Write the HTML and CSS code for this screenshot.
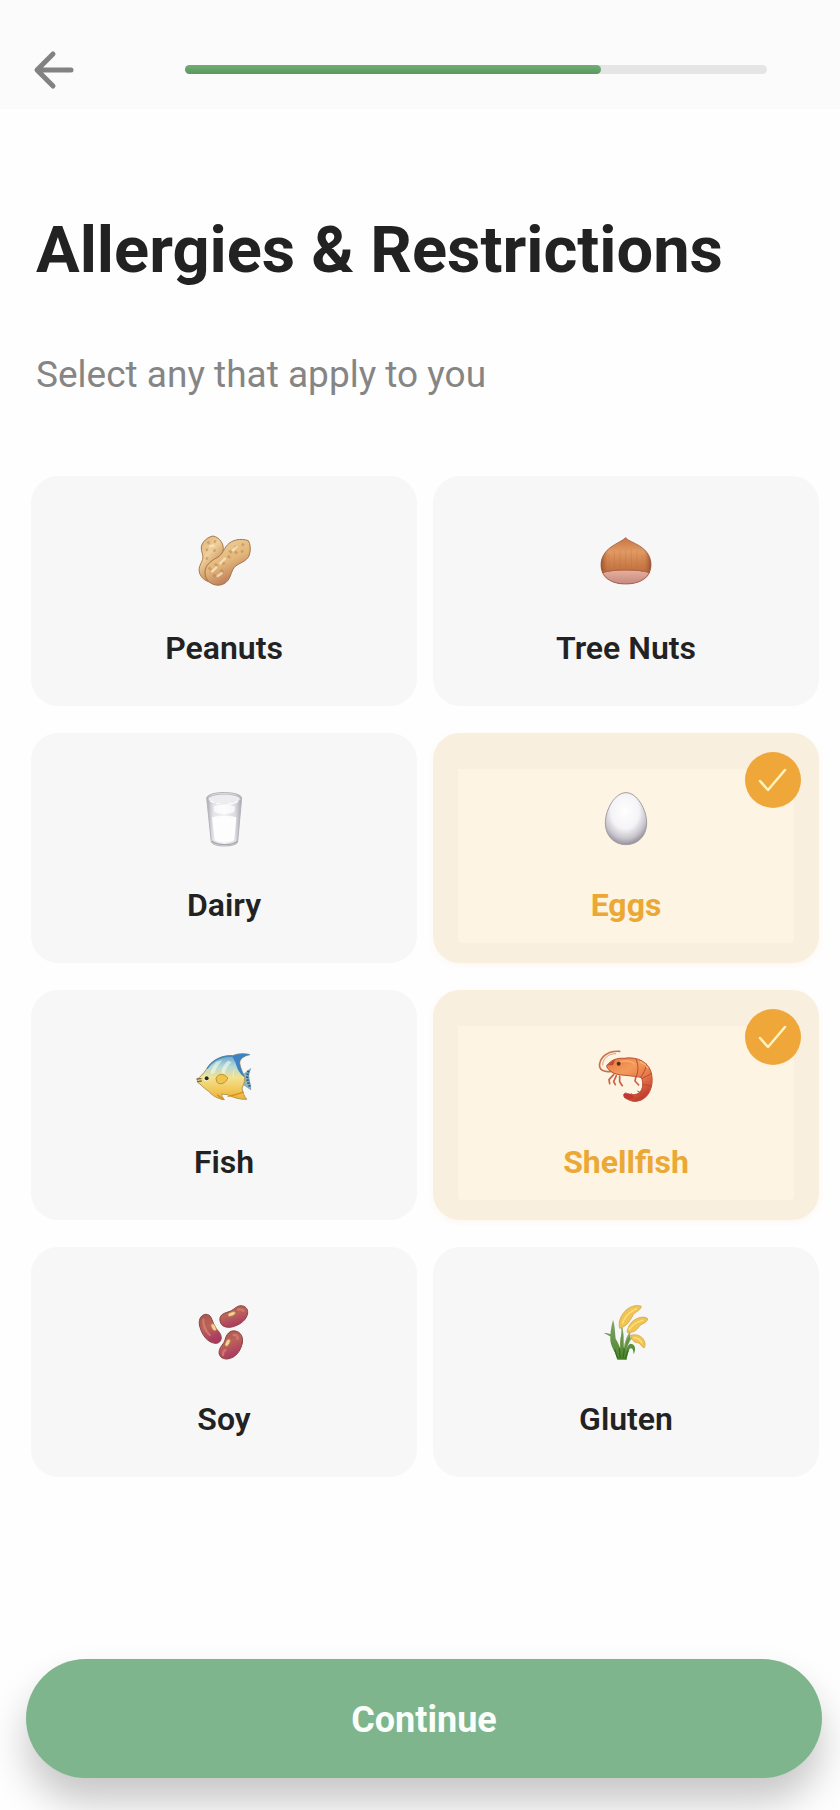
FILE: index.html
```html
<!DOCTYPE html>
<html lang="en">
<head>
<meta charset="utf-8">
<meta name="viewport" content="width=device-width, initial-scale=1">
<title>Allergies &amp; Restrictions</title>
<link rel="stylesheet" href="styles.css">
</head>
<body>
<div class="screen">
  <header class="topbar">
    <button class="back" type="button" aria-label="Back">
      <svg viewBox="0 0 44 44" fill="none" stroke="#828282" stroke-width="5" stroke-linecap="round" stroke-linejoin="round"><path d="M22 7 6 23l16 16M7 23h33"/></svg>
    </button>
    <div class="progress" role="progressbar" aria-label="Setup progress" aria-valuemin="0" aria-valuemax="7" aria-valuenow="5">
      <div class="progress-fill" style="width:71.5%"></div>
    </div>
  </header>

  <main class="content">
    <h1 class="title">Allergies &amp; Restrictions</h1>
    <p class="subtitle">Select any that apply to you</p>

    <div class="grid">
      <label class="card">
        <input class="card-input" type="checkbox" name="allergy" value="peanuts">
        <svg class="food" viewBox="40 36 180 180" aria-hidden="true">
          <defs>
            <linearGradient id="nutA" x1="0" y1="0" x2="0.6" y2="1"><stop offset="0" stop-color="#d9ae72"/><stop offset=".45" stop-color="#efcf9c"/><stop offset=".8" stop-color="#cb965c"/><stop offset="1" stop-color="#b0605a"/></linearGradient>
            <linearGradient id="nutB" x1="0.2" y1="0" x2="0.7" y2="1"><stop offset="0" stop-color="#f0d3a0"/><stop offset=".5" stop-color="#e3b77c"/><stop offset="1" stop-color="#b06a50"/></linearGradient>
          </defs>
          <path d="M97 48c-16 3-33 17-35 33-2 15 8 23 4 37-4 12-13 22-10 38 4 20 24 31 42 32 20-12 20-40 15-58-3-12 8-22 14-36 5-20-9-42-30-46Z" fill="url(#nutA)" stroke="#a67a50" stroke-width="3"/>
          <path d="M203 62c-22-8-49-3-63 13-13 14-11 26-31 38-20 10-41 27-35 53 5 24 33 37 56 25 21-11 19-34 31-49 12-14 37-15 45-37 5-16 3-33-3-43Z" fill="url(#nutB)" stroke="#a8744a" stroke-width="3"/>
          <g stroke="#b98046" stroke-width="8" opacity=".5" fill="none"><path d="m80 70 7-3m13-4 6 3m-31 24 7-1m16 2 7 1m-30 22 7 2M183 72l7 4m-28 2 6 7m-22 6 7 8m29-8 5 6m-45 10 6 7m15-20 6 7m-44 24 6 8m-28-2 7 8m-26 3 7 8m29-1 7 8m-29 7 7 5"/></g>
          <g stroke="#ffe9c4" stroke-width="7" stroke-linecap="round" opacity=".75"><path d="m88 79 10-3m58 15 12-10m-49 49 14-14M95 154l12-12m4 26 12-8"/></g>
        </svg>
        <span class="card-name">Peanuts</span>
      </label>

      <label class="card">
        <input class="card-input" type="checkbox" name="allergy" value="tree-nuts">
        <svg class="food" viewBox="46 36 180 180" aria-hidden="true">
          <defs>
            <linearGradient id="chest" x1="0" y1="0" x2="0" y2="1"><stop offset="0" stop-color="#c87442"/><stop offset=".3" stop-color="#e19a63"/><stop offset="1" stop-color="#a95425"/></linearGradient>
            <linearGradient id="chestSide"><stop offset="0" stop-color="#8b4426" stop-opacity=".75"/><stop offset=".15" stop-color="#b66639" stop-opacity="0"/><stop offset=".85" stop-color="#b66639" stop-opacity="0"/><stop offset="1" stop-color="#8b4426" stop-opacity=".75"/></linearGradient>
            <linearGradient id="chestBase" x1="0" y1="0" x2="0" y2="1"><stop offset="0" stop-color="#e3b09c"/><stop offset="1" stop-color="#c98882"/></linearGradient>
          </defs>
          <path d="M135 53c-9 9-25 15-41 26-23 15-33 36-33 55 0 38 31 58 74 58s76-20 76-58c0-21-10-41-34-56-17-11-33-15-42-25Z" fill="url(#chest)"/>
          <path d="M135 53c-9 9-25 15-41 26-23 15-33 36-33 55 0 38 31 58 74 58s76-20 76-58c0-21-10-41-34-56-17-11-33-15-42-25Z" fill="url(#chestSide)"/>
          <path d="M65 159c33-10 108-10 142 0-10 23-38 33-72 33s-60-10-70-33Z" fill="url(#chestBase)"/>
          <path d="M64 158c34-11 110-11 144 0" fill="none" stroke="#b2644a" stroke-width="3"/>
          <path d="M85 103v43m16-53v51m17-54v52m17-54v53m17-51v50m17-47v49m16-38v36" stroke="#bd6635" stroke-width="3" opacity=".25"/>
          <path d="M135 53c-9 9-25 15-41 26-23 15-33 36-33 55 0 38 31 58 74 58s76-20 76-58c0-21-10-41-34-56-17-11-33-15-42-25Z" fill="none" stroke="#925238" stroke-width="3" opacity=".7"/>
        </svg>
        <span class="card-name">Tree Nuts</span>
      </label>

      <label class="card">
        <input class="card-input" type="checkbox" name="allergy" value="dairy">
        <svg class="food" viewBox="40 27 180 180" aria-hidden="true">
          <defs>
            <linearGradient id="glass"><stop offset="0" stop-color="#a8a8af"/><stop offset=".18" stop-color="#e3e3e7"/><stop offset=".5" stop-color="#f4f4f6"/><stop offset=".82" stop-color="#dadadf"/><stop offset="1" stop-color="#a6a6ae"/></linearGradient>
          </defs>
          <path d="M78 54c3-22 102-22 105 0l-12 132c-5 16-74 16-79 0Z" fill="url(#glass)" stroke="#b4b4ba" stroke-width="3"/>
          <path d="M94 112c15-5 59-5 73 0l-6 68c-8 9-51 9-59 0Z" fill="#fdfdfe"/>
          <path d="M99 80c15-9 49-8 64 0l-2 16c-20 8-40 8-60 0Z" fill="#fff" opacity=".75"/>
          <ellipse cx="130.500" cy="57" rx="49" ry="15" fill="#ededf0" stroke="#b7b7bd" stroke-width="3"/>
          <path d="M88 63c20 12 64 13 84 1" fill="none" stroke="#fff" stroke-width="4"/>
          <path d="M94 184c14 13 64 13 76 0" fill="none" stroke="#a4a4ab" stroke-width="4"/>
        </svg>
        <span class="card-name">Dairy</span>
      </label>

      <label class="card">
        <input class="card-input" type="checkbox" name="allergy" value="eggs" checked>
        <svg class="food" viewBox="526 207 180 180" aria-hidden="true">
          <defs>
            <radialGradient id="egg" cx=".48" cy=".36" r=".68"><stop offset="0" stop-color="#fff"/><stop offset=".5" stop-color="#f4f3f6"/><stop offset=".78" stop-color="#c6c2ca"/><stop offset="1" stop-color="#857f8b"/></radialGradient>
          </defs>
          <path d="M616 218c-33 0-62 50-62 91 0 39 27 65 62 65s62-26 62-65c0-41-29-91-62-91Z" fill="url(#egg)" stroke="#a39da6" stroke-width="3"/>
        </svg>
        <span class="card-name">Eggs</span>
        <svg class="badge" viewBox="0 0 56 56" aria-hidden="true"><circle cx="28" cy="28" r="28" fill="#f0a73a"/><path d="m15 29 8 9 17-20" fill="none" stroke="#fff3c0" stroke-width="2.500" stroke-linecap="round" stroke-linejoin="round"/></svg>
      </label>

      <label class="card">
        <input class="card-input" type="checkbox" name="allergy" value="fish">
        <svg class="food" viewBox="40 33 180 180" aria-hidden="true">
          <defs>
            <linearGradient id="fish" x1="0" y1="0" x2="0" y2="1"><stop offset="0" stop-color="#5c9bcd"/><stop offset=".28" stop-color="#b5d8d6"/><stop offset=".52" stop-color="#f3e290"/><stop offset="1" stop-color="#efb22f"/></linearGradient>
          </defs>
          <path d="M178 126c10-6 18-15 32-25-6 13-7 20-5 29 1 12 6 20 5 34-12-9-22-15-32-22Z" fill="#8fb7b9" stroke="#5f8da6" stroke-width="2"/>
          <path d="M204 107c-4 8-3 15-5 23 3 8 4 17 9 26" fill="none" stroke="#2f5b8c" stroke-width="7" stroke-dasharray="5 4"/>
          <path d="M50 132c10-7 18-16 27-29 15-24 42-43 79-41 17-7 34-8 52-3-20 4-31 13-31 25 2 16 10 29 15 43 0 16-4 24-8 32 1 13 7 25 14 34-20 1-39-5-57-14-6 0-12-1-18-2 0 6 3 11 8 17-20-2-37-13-47-25-9-6-17-13-26-22-7-2-9-9-8-15Z" fill="url(#fish)" stroke="#af995c" stroke-width="3"/>
          <path d="M154 63c17-7 36-9 54-4-20 4-31 13-31 25 2 16 10 29 15 43-14-9-23-25-27-43Z" fill="#3d83c4"/>
          <path d="M79 101c15-22 40-39 77-38" fill="none" stroke="#4a85b5" stroke-width="4"/>
          <path d="M107 81c-10 12-17 25-18 37l13-4c4-15 12-25 23-38Zm35-4c-12 9-19 22-20 36l10 3c3-15 11-25 21-35Zm20 22c-5 9-7 19-5 33" fill="#f5fbe9" opacity=".6"/>
          <path d="M141 184c23-3 36-9 48-13m-79 8c6 6 10 10 18 14" fill="none" stroke="#d78c25" stroke-width="4"/>
          <path d="M106 130c6-16 25-14 35-2-4 18-26 24-33 12Z" fill="#edc64e" stroke="#c58f2e" stroke-width="3"/>
          <circle cx="77" cy="130" r="9" fill="#f8efae"/><circle cx="78" cy="130" r="6" fill="#202a30"/>
          <path d="m49 132 12-1m-10 9 11-2" stroke="#7d6b50" stroke-width="4" stroke-linecap="round"/>
        </svg>
        <span class="card-name">Fish</span>
      </label>

      <label class="card">
        <input class="card-input" type="checkbox" name="allergy" value="shellfish" checked>
        <svg class="food" viewBox="46 33 180 180" aria-hidden="true">
          <defs>
            <linearGradient id="shrimp" x1="0" y1="0" x2=".6" y2="1"><stop offset="0" stop-color="#e67942"/><stop offset=".4" stop-color="#f39a59"/><stop offset=".7" stop-color="#e4754b"/><stop offset="1" stop-color="#c3402f"/></linearGradient>
          </defs>
          <path d="M117 49C80 46 54 69 57 96c4 12 20 15 35 13" fill="none" stroke="#c7714e" stroke-width="5" stroke-linecap="round"/>
          <path d="M106 56C83 55 65 72 66 91" fill="none" stroke="#dc9a78" stroke-width="3"/>
          <path d="m99 119-14 15 2 12m20-24-8 18 5 9m13-26 0 17 8 12m41-28-3 14 11 12" fill="none" stroke="#cb6042" stroke-width="5" stroke-linecap="round" stroke-linejoin="round"/>
          <path d="M78 92c13-17 30-24 52-22 41-7 78 13 83 49 7 37-11 74-41 79-15 4-28-3-40-10-5-7-3-13 3-14 14 6 31 8 42-2 10-10 12-27 5-45-16-3-32-4-49-6-20-2-34-3-44-13-7-5-11-10-11-16Z" fill="url(#shrimp)" stroke="#bb5134" stroke-width="3"/>
          <path d="M166 73c7 14 8 34 1 52m31-39c-3 17-10 31-19 42m35-13c-12 7-21 11-31 16m30 23c-12-4-20-5-28-5m5 36c-6-8-12-14-20-17m-14 26c1-8-1-14-4-19" fill="none" stroke="#b94b2e" stroke-width="3"/>
          <path d="M118 80c22-4 38-2 43 8M178 80c12 5 20 12 24 20" fill="none" stroke="#ffbe7b" stroke-width="5" opacity=".65"/>
          <path d="m79 91 25-18-7 18" fill="#bf492e"/><circle cx="114" cy="86" r="6" fill="#542f29"/>
          <path d="m129 177 18-1 14 10-16 8-14-7Z" fill="#c43833"/>
        </svg>
        <span class="card-name">Shellfish</span>
        <svg class="badge" viewBox="0 0 56 56" aria-hidden="true"><circle cx="28" cy="28" r="28" fill="#f0a73a"/><path d="m15 29 8 9 17-20" fill="none" stroke="#fff3c0" stroke-width="2.500" stroke-linecap="round" stroke-linejoin="round"/></svg>
      </label>

      <label class="card">
        <input class="card-input" type="checkbox" name="allergy" value="soy">
        <svg class="food" viewBox="40 39 180 180" aria-hidden="true">
          <defs>
            <linearGradient id="bean" x1="0" y1="0" x2=".4" y2="1"><stop offset="0" stop-color="#a5584e"/><stop offset=".5" stop-color="#bd625a"/><stop offset="1" stop-color="#a93a62"/></linearGradient>
          </defs>
          <g fill="url(#bean)" stroke="#8c4644" stroke-width="3">
            <path d="M75 73c-17 2-23 20-17 39 7 24 22 45 45 48 16 1 22-12 17-26-4-10-13-15-19-27-8-19-10-35-26-34Z"/>
            <path d="M182 47c-15-1-23 15-40 19-14 4-27 10-24 27 4 20 26 22 43 16 20-7 38-21 40-40 1-14-8-21-19-22Z"/>
            <path d="M164 123c-17-3-27 10-31 27-3 12-14 18-17 31-4 16 7 27 24 26 25-3 40-24 45-48 3-17-4-33-21-36Z"/>
          </g>
          <g fill="none" stroke="#dd8778" stroke-width="7" stroke-linecap="round" opacity=".65"><path d="M68 89c-1 18 8 35 19 46m85-76c8-2 13 0 16 3m-29 73c8-2 12 4 12 11m-37 34c-7 5-8 10-7 15"/></g>
          <g fill="#f3d58b" stroke="#b9795a" stroke-width="2"><ellipse cx="99" cy="112" rx="6" ry="12" transform="rotate(-29 99 112)"/><ellipse cx="153" cy="72" rx="12" ry="6" transform="rotate(-21 153 72)"/><ellipse cx="141" cy="158" rx="6" ry="12" transform="rotate(28 141 158)"/></g>
        </svg>
        <span class="card-name">Soy</span>
      </label>

      <label class="card">
        <input class="card-input" type="checkbox" name="allergy" value="gluten">
        <svg class="food" viewBox="46 39 180 180" aria-hidden="true">
          <defs>
            <linearGradient id="leaf" x1="0" y1="0" x2="0" y2="1"><stop offset="0" stop-color="#83a66b"/><stop offset="1" stop-color="#4d8429"/></linearGradient>
          </defs>
          <path d="M124 113c2 31-4 62-3 90m27-76c-14 24-19 47-18 75m29-66c-21 18-25 42-28 66" fill="none" stroke="#89ae62" stroke-width="5"/>
          <path d="M110 209c-4-22-18-36-21-57-1-23 2-39 8-63 8 24 5 49 11 72-8-19-22-23-39-32 20-2 35 11 42 28l8 18c-2-22 0-38 8-54 4 24 0 44 4 61 3-23 8-39 18-49 1 20-9 31-14 49 6-17 12-24 21-19 9 5 9 18 3 30-1-13-4-20-9-18-7 3-9 20-12 34Z" fill="url(#leaf)"/>
          <path d="m111 206-9-28m17 28-3-31m11 31 4-31m2 32 10-26" stroke="#347024" stroke-width="4"/>
          <g fill="#f0c452" stroke="#cf9f44" stroke-width="2">
            <path d="M117 115c-6-20 5-43 22-57 14-11 31-14 43-9-4 15-18 16-24 25-9 16-17 34-41 41Z"/>
            <path d="M139 127c2-19 15-36 31-42 12-5 26-5 31 1-2 14-16 13-25 23-8 13-18 20-37 18Z"/>
            <path d="M150 136c14-5 29 0 36 9 8 9 10 21 4 29-9-5-10-15-20-16-10 0-18-9-20-22Z"/>
          </g>
          <g fill="none" stroke="#ffdf79" stroke-width="5" stroke-dasharray="6 5" stroke-linecap="round"><path d="M126 99c7-21 23-35 44-44m-24 63c11-16 26-24 44-28m-29 53c11 1 20 8 24 18"/></g>
        </svg>
        <span class="card-name">Gluten</span>
      </label>
    </div>
  </main>

  <footer class="footer">
    <button class="continue" type="button">Continue</button>
  </footer>
</div>
</body>
</html>
```
FILE: styles.css
```css
*,
*::before,
*::after {
  box-sizing: border-box;
}

body {
  margin: 0;
  background: #fefefe;
  color: #222;
  font-family: Roboto, "Liberation Sans", sans-serif;
}

.screen {
  display: flex;
  flex-direction: column;
  min-height: 100vh;
  overflow: hidden;
}

.topbar {
  display: flex;
  align-items: center;
  gap: 110px;
  padding: 47px 73px 18px 31px;
  background: #fbfbfb;
}

.back {
  flex: none;
  width: 44px;
  height: 44px;
  padding: 0;
  border: 0;
  background: none;
  cursor: pointer;
}

.back svg {
  display: block;
}

.progress {
  flex: 1;
  height: 9px;
  border-radius: 5px;
  background: #e5e5e5;
}

.progress-fill {
  height: 100%;
  border-radius: 5px;
  background: linear-gradient(#72ad77, #5a985f);
}

.content {
  padding: 101px 21px 0 31px;
}

.title {
  margin: 0;
  padding-left: 5px;
  font-size: 65px;
  line-height: 80px;
  font-weight: 700;
}

.subtitle {
  margin: 61px 0 0;
  padding-left: 5px;
  color: #858585;
  font-size: 37px;
  line-height: 48px;
}

.grid {
  display: grid;
  grid-template-columns: 1fr 1fr;
  gap: 27px 16px;
  margin-top: 77px;
}

.card {
  position: relative;
  display: flex;
  flex-direction: column;
  align-items: center;
  gap: 36px;
  min-height: 230px;
  padding: 56px 25px 20px;
  border-radius: 27px;
  background: #f7f7f7;
  cursor: pointer;
}

.card-input {
  position: absolute;
  inset: 0;
  width: 100%;
  height: 100%;
  margin: 0;
  opacity: 0;
  cursor: pointer;
}

.card:has(:checked) {
  padding-top: 36px;
  background: linear-gradient(#fdf4e3, #fdf4e3) content-box, #f9efdf;
  box-shadow: 0 2px 6px rgba(240, 167, 58, 0.08);
  color: #eba834;
}

.card:has(:checked) .food {
  margin-top: 20px;
}

.card:has(:focus-visible) {
  outline: 3px solid #7fb58d;
}

.food {
  width: 60px;
  height: 60px;
}

.card-name {
  font-size: 32px;
  line-height: 40px;
  font-weight: 600;
}

.card:has(:checked) .card-name {
  font-weight: 700;
}

.badge {
  position: absolute;
  top: 19px;
  right: 18px;
  width: 56px;
  height: 56px;
  pointer-events: none;
}

.footer {
  margin-top: auto;
  padding: 60px 18px 32px 26px;
}

.continue {
  display: block;
  width: 100%;
  padding: 37px 24px 34px;
  border: 0;
  border-radius: 60px;
  background: #7fb58d;
  box-shadow: 0 24px 38px rgba(0, 0, 0, 0.22);
  color: #fafffa;
  font: 700 36px/48px Roboto, "Liberation Sans", sans-serif;
  cursor: pointer;
}
```
